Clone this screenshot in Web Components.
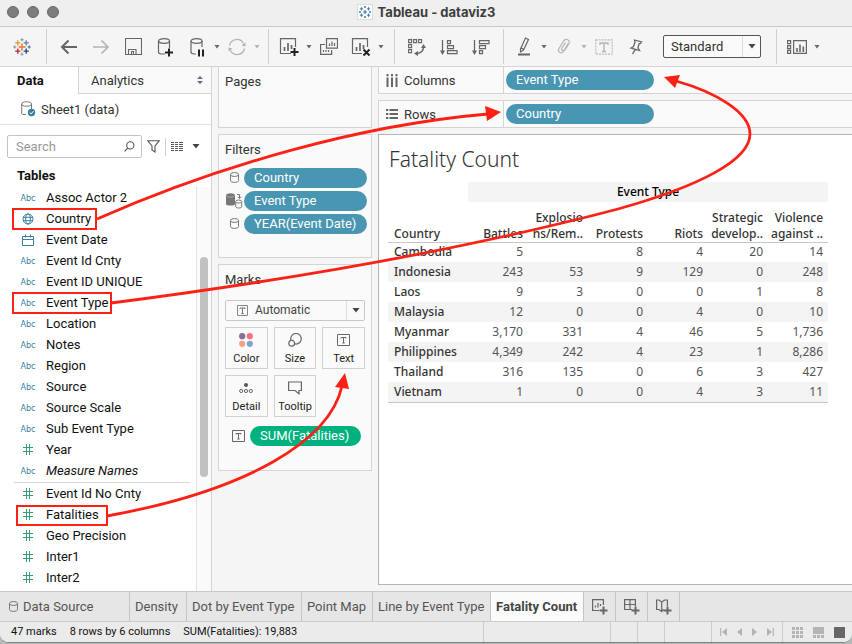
<!DOCTYPE html>
<html lang="en">
<head>
<meta charset="utf-8">
<title>Tableau - dataviz3</title>
<style>
  html, body { margin: 0; height: 100%; }
  body { font-family: Roboto, "Liberation Sans", sans-serif; font-size: 13px; color: #1f1f1f; background: #b4bab7; overflow: hidden; }
</style>
</head>
<body>
<tb-app></tb-app>
<script>
const g = '#666', lg = '#b4b4b4', blue = '#3a7f9f', green = '#3a9c77';
const cross = (x, y, r, c, w = 1.4) => `<path d="M${x - r} ${y}H${x + r}M${x} ${y - r}V${y + r}" stroke="${c}" stroke-width="${w}"/>`;
const ICONS = {
  logo: [20, 20, cross(10, 10, 3.5, '#e8762c', 1.5) + cross(5.8, 5.8, 2.6, '#e8912c', 1.3) + cross(14.2, 5.8, 2.6, '#5b879b', 1.3) + cross(5.8, 14.2, 2.6, '#c72035', 1.3) + cross(14.2, 14.2, 2.6, '#1f457e', 1.3) + cross(10, 2.8, 1.6, '#5b9bb0', 1) + cross(10, 17.2, 1.6, '#8a93b8', 1) + cross(2.8, 10, 1.6, '#7199a6', 1) + cross(17.2, 10, 1.6, '#59659a', 1)],
  back: [18, 16, `<path d="M17 8H2M8.500 1.500L2 8l6.500 6.500" stroke="${g}" stroke-width="2"/>`],
  forward: [18, 16, `<path d="M1 8h15M9.500 1.500L16 8l-6.500 6.500" stroke="${lg}" stroke-width="1.700"/>`],
  save: [17, 17, `<path d="M.5 .5h16v16H.5zM3.500 16v-4.500h7.500V16M6.500 16v-2.500h2V16" stroke="${g}" stroke-width="1.100"/>`],
  dbadd: [20, 20, `<path d="M10 17H6.500C4 17 3.500 16 3.500 15V4M14.500 4v7" stroke="${g}" stroke-width="1.200"/><ellipse cx="9" cy="4" rx="5.500" ry="2.300" stroke="${g}" stroke-width="1.200"/><path d="M14 11.500v8M10 15.500h8" stroke="#222" stroke-width="2"/>`],
  dbpause: [20, 20, `<path d="M9 17H7C4.500 17 4 16 4 15V4M15 4v6" stroke="${g}" stroke-width="1.200"/><ellipse cx="9.500" cy="4" rx="5.500" ry="2.300" stroke="${g}" stroke-width="1.200"/><path d="M12 12.500v7M16 12.500v7" stroke="#222" stroke-width="2"/>`],
  refresh: [20, 18, `<path d="M2.500 7.500A7.500 7.500 0 0 1 16.500 5.500M17.500 10.500A7.500 7.500 0 0 1 3.500 12.500" stroke="${lg}" stroke-width="1.300"/><path d="M14.500 7.500l4-3v4zM5.500 10.500l-4 3v-4z" fill="${lg}"/>`],
  caret: [6, 4, `<path d="M.5 0h5L3 3.500z" fill="${g}"/>`],
  caretLight: [6, 4, `<path d="M.5 0h5L3 3.500z" fill="${lg}"/>`],
  caretBig: [8, 5, `<path d="M.5 0h7L4 4.500z" fill="#444"/>`],
  newsheet: [20, 18, `<path d="M12 15.500H1.500V.7h15V9" stroke="${g}" stroke-width="1.200"/><path d="M5.500 9v4M9 5v8M12.500 7v4" stroke="${g}" stroke-width="1.700"/><path d="M15.500 10v8M11.500 14h8" stroke="#222" stroke-width="2"/>`],
  dup: [18, 17, `<path d="M6.500 .6h11v9.500h-11zM5 6.500H.6v9.900h11V12" stroke="${g}" stroke-width="1.200"/><path d="M9.500 5.500V8M12 3.500V8M14.500 5V8M3.500 12v2M6 12v2M8.500 12v2" stroke="${g}" stroke-width="1.200"/>`],
  clear: [20, 18, `<path d="M11 15.500H1.500V.7h15V9" stroke="${g}" stroke-width="1.200"/><path d="M5.500 9v4M9 5v8M12.500 7v4" stroke="${g}" stroke-width="1.700"/><path d="M12.500 11.500l6 6M18.500 11.500l-6 6" stroke="#222" stroke-width="2"/>`],
  swap: [18, 18, `<path d="M.6 1.600h3v3h-3zM5.600 1.600h3v3h-3zM10.600 1.600h3v3h-3zM.6 6.600h3v3h-3zM.6 11.600h3v3h-3z" stroke="${g}" stroke-width="1.100"/><path d="M15.500 9c0 4-2 6-7 6.500" stroke="${g}" stroke-width="1.400"/><path d="M15.500 6l2.500 4h-5zM6 15.500l4-2.500v5z" fill="${g}"/>`],
  sortasc: [18, 16, `<path d="M2.500 1v12" stroke="${g}" stroke-width="1.300"/><path d="M0 11.500h5L2.500 16z" fill="${g}"/><path d="M7.500 1.600h3v3h-3zM7.500 6.600h6v3h-6zM7.500 11.600h9.500v3H7.500z" stroke="${g}" stroke-width="1.200"/>`],
  sortdesc: [18, 16, `<path d="M2.500 1v12" stroke="${g}" stroke-width="1.300"/><path d="M0 11.500h5L2.500 16z" fill="${g}"/><path d="M7.500 1.600h9.500v3H7.500zM7.500 6.600h6v3h-6zM7.500 11.600h3v3h-3z" stroke="${g}" stroke-width="1.200"/>`],
  pen: [14, 19, `<path d="M8.500 1l3 1.500-5 10.500-3 2V12zM4 11l3 1.500" stroke="${g}" stroke-width="1.200"/><path d="M1 17.500h12" stroke="${g}" stroke-width="2"/>`],
  clip: [14, 17, `<path d="M11 5.500l-4.500 8C4.500 16 .5 14.500 1.700 11L7 2.500C9 .2 13.500 2 12 5.500L7.800 12c-1.500 1.500-4 .2-3-1.800L8.500 4.500" stroke="${lg}" stroke-width="1.200"/>`],
  textbox: [18, 16, `<path d="M.8 .8h16.400v14.400H.8z" stroke="#bbb" stroke-width="1.200" stroke-dasharray="2 1"/><path d="M5 6V4h8v2M9 4v8.500M7 12.500h4" stroke="${lg}" stroke-width="1.400"/>`],
  pin: [14, 16, `<path d="M5.500 1l7 2-1 1.500-1.500.3-1 4.200 1.500 2.500-8.500-2.500 2.300-1.200L6 3.500zM6.300 10.300L3.500 15" stroke="${g}" stroke-width="1.300"/>`],
  showme: [20, 14, `<path d="M.6 .6h3v3h-3zM.6 5.600h3v3h-3zM.6 10.400h3v3h-3zM6.600 .6h12.800v12.800H6.600z" stroke="${g}" stroke-width="1.200"/><path d="M10 8v4M13 4.500V12M16.300 6.500V12" stroke="${g}" stroke-width="1.600"/>`],
  app: [14, 14, cross(7, 7, 2, '#3f7fa5', 1.2) + cross(3.5, 3.8, 1.6, '#3f7fa5', 1) + cross(10.5, 3.8, 1.6, '#3f7fa5', 1) + cross(3.5, 10.2, 1.6, '#3f7fa5', 1) + cross(10.5, 10.2, 1.6, '#3f7fa5', 1) + cross(7, 2, 1, '#3f7fa5', 1) + cross(7, 12, 1, '#3f7fa5', 1) + cross(2, 7, 1, '#3f7fa5', 1) + cross(12, 7, 1, '#3f7fa5', 1)],
  updown: [6, 8, `<path d="M0 3h6L3 0zM0 5h6L3 8z" fill="#5f6b80"/>`],
  source: [15, 16, `<path d="M5 13.500H3c-1.500 0-2.300-.6-2.300-1.500V3M10.500 3v5" stroke="#777" stroke-width="1"/><ellipse cx="5.600" cy="3" rx="4.900" ry="2.200" stroke="#777"/><circle cx="10.500" cy="11.500" r="3.700" fill="${blue}"/><path d="M8.700 11.500l1.400 1.400 2.400-2.700" stroke="#fff"/>`],
  glass: [11, 11, `<circle cx="6.300" cy="4.400" r="3.600" stroke="#555" stroke-width="1.100"/><path d="M3.700 7.200L.6 10.400" stroke="#555" stroke-width="1.200"/>`],
  funnel: [13, 13, `<path d="M.8 .8h11.400L8 6v6L5 10V6z" stroke="#555" stroke-width="1.100"/>`],
  list: [12, 10, `<path d="M0 .5h3M4 .5h3M8 .5h4M0 2.500h3M4 2.500h3M8 2.500h4M0 4.500h3M4 4.500h3M8 4.500h4M0 6.500h3M4 6.500h3M8 6.500h4M0 8.500h3M4 8.500h3M8 8.500h4" stroke="#555"/>`],
  globe: [12, 12, `<circle cx="6" cy="6" r="5" stroke="${blue}"/><ellipse cx="6" cy="6" rx="2.300" ry="5" stroke="${blue}"/><path d="M1 4.300h10M1 7.700h10" stroke="${blue}"/>`],
  cal: [12, 12, `<path d="M.5 2.500h11v9H.5zM.5 5.500h11M3.500 .5v3M8.500 .5v3" stroke="${blue}"/>`],
  num: [10, 11, `<path d="M0 3.500h10M0 7.500h10M3.500 0v11M6.500 0v11" stroke="${green}"/>`],
  cyl: [9, 11, `<path d="M.5 2.500v6c0 2.500 8 2.500 8 0v-6" stroke="#777"/><ellipse cx="4.500" cy="2.500" rx="4" ry="2" stroke="#777"/>`],
  cyl2: [17, 16, `<path d="M0 2.500C0-.5 9-.5 9 2.500V11c0 2-9 2-9 0z" fill="#777"/><path d="M.5 3c1 1.500 7 1.500 8 0" stroke="#bbb" stroke-width=".7"/><path d="M9.700 8.500v5c0 2 6 2 6 0v-5" fill="#fafafa" stroke="#777"/><ellipse cx="12.700" cy="8.500" rx="3" ry="1.500" fill="#fafafa" stroke="#777"/><path d="M11 1.500h2.500V5M12 3.800l1.500 1.700L15 3.800" stroke="#777"/>`],
  cols: [12, 13, `<path d="M1.500 3.500V13M6 3.500V13M10.500 3.500V13M1.500 0v2.300M6 0v2.300M10.500 0v2.300" stroke="#666" stroke-width="2"/>`],
  rows: [12, 10, `<path d="M3.500 1H12M3.500 5H12M3.500 9H12M0 1h2.300M0 5h2.300M0 9h2.300" stroke="#666" stroke-width="1.800"/>`],
  t: [13, 12, `<path d="M.5 .5h12v11H.5z" stroke="#666"/><path d="M4 4.500V3.500h5v1M6.500 3.500V9M5.300 9h2.400" stroke="#666"/>`],
  tgray: [11, 11, `<path d="M.5 .5h10v10H.5z" stroke="#888"/><path d="M3 4V3h5v1M5.500 3v5.500M4.300 8.500h2.400" stroke="#777"/>`],
  color: [14, 14, `<circle cx="3.200" cy="3.200" r="3.100" fill="#8a6d9b"/><circle cx="10.800" cy="3.200" r="3.100" fill="#f9707f"/><circle cx="3.200" cy="10.800" r="3.100" fill="#f4a37c"/><circle cx="10.800" cy="10.800" r="3.100" fill="#7fa5cf"/>`],
  size: [14, 14, `<circle cx="8" cy="5.800" r="5.300" stroke="#666" stroke-width="1.200"/><circle cx="3.700" cy="10.300" r="2.900" fill="#fafafa" stroke="#666" stroke-width="1.200"/>`],
  detail: [14, 14, `<circle cx="7" cy="4" r="2" fill="#555"/><circle cx="2.200" cy="10" r="1.600" stroke="#666"/><circle cx="7" cy="10" r="1.600" stroke="#666"/><circle cx="11.800" cy="10" r="1.600" stroke="#666"/>`],
  tooltip: [14, 14, `<path d="M.6 1h12.800v8.500H11v3.300L7 9.500H.6z" stroke="#666" stroke-width="1.200"/>`],
  tabsheet: [16, 16, `<path d="M7 11.500H.6V.6h10.800V6" stroke="#666" stroke-width="1.200"/><path d="M3.500 6.500v2M6 4v4.500M8.500 5v2" stroke="#666" stroke-width="1.200"/><path d="M11.500 7.500v8M7.500 11.500h8" stroke="#666" stroke-width="2"/>`],
  tabdash: [16, 16, `<path d="M8 10.500H.6V.6h10.800V7M6 .6v10M.6 5.500h10.800" stroke="#666" stroke-width="1.200"/><path d="M11.500 7.500v8M7.500 11.500h8" stroke="#666" stroke-width="2"/>`],
  tabstory: [16, 16, `<path d="M.6 1v9.500H3l2.700 2V3L3 1zM5.700 3l3-2h2.700v6M5.700 12l2-1.500" stroke="#666" stroke-width="1.200"/><path d="M11.500 7.500v8M7.500 11.500h8" stroke="#666" stroke-width="2"/>`],
  first: [7, 8, `<path d="M.7 0v8" stroke="#b4b4b4" stroke-width="1.200"/><path d="M7 0v8L2 4z" fill="#b4b4b4"/>`],
  prev: [5, 8, `<path d="M5 0v8L0 4z" fill="#b4b4b4"/>`],
  next: [5, 8, `<path d="M0 0v8l5-4z" fill="#b4b4b4"/>`],
  last: [7, 8, `<path d="M6.300 0v8" stroke="#b4b4b4" stroke-width="1.200"/><path d="M0 0v8l5-4z" fill="#b4b4b4"/>`],
  grid: [11, 11, `<path d="M0 1.500h11M0 5.500h11M0 9.500h11" stroke="#b4b4b4" stroke-width="3" stroke-dasharray="3 1"/>`],
  film: [11, 11, `<path d="M0 0h11v7H0z" fill="#b4b4b4"/><path d="M0 9.500h11" stroke="#b4b4b4" stroke-width="3" stroke-dasharray="3 1"/>`],
  full: [11, 11, `<path d="M0 0h11v11H0z" fill="#666"/>`]
};

function define(name, css, html) {
  const tpl = document.createElement('template');
  customElements.define(name, class extends HTMLElement {
    connectedCallback() {
      if (this.shadowRoot) return;
      tpl.innerHTML = `<style>*{box-sizing:border-box}button{font:inherit;color:inherit;background:none;border:0;padding:0;margin:0}${css}</style>${typeof html === 'function' ? html(this) : html}`;
      this.attachShadow({ mode: 'open' }).append(tpl.content.cloneNode(true));
    }
  });
}

define('tb-icon', ':host{display:inline-flex;flex:none}svg{display:block}', el => {
  const [w, h, body] = ICONS[el.getAttribute('name')];
  return `<svg width="${w}" height="${h}" viewBox="0 0 ${w} ${h}" fill="none" aria-hidden="true">${body}</svg>`;
});

define('tb-title-bar', `
  :host{box-sizing:border-box;display:flex;align-items:center;height:27px;flex:none;background:#efefef;border-bottom:1px solid #c9c9c9;padding:0 7px 2px}
  .lights{display:flex;gap:8px;flex:1}
  .lights button{width:12px;height:12px;border-radius:50%;background:#7d7d7d;border:1px solid #666}
  h1{display:flex;align-items:center;gap:5px;margin:0;font:700 13px/16px Inter,sans-serif;color:#3d3d3d}
  .doc{display:flex;background:#fbfbfb;border:1px solid #ddd}
  .end{flex:1}`,
  `<div class="lights"><button aria-label="Close"></button><button aria-label="Minimize"></button><button aria-label="Zoom"></button></div>
   <h1><span class="doc"><tb-icon name="app"></tb-icon></span>Tableau - dataviz3</h1><div class="end"></div>`);

define('tb-tool', `
  :host{display:flex;flex:none}
  button{width:32px;height:32px;display:flex;align-items:center;justify-content:center}
  :host([small]) button{width:8px}`,
  el => `<button aria-label="${el.getAttribute('label')}"><tb-icon name="${el.getAttribute('icon')}"></tb-icon></button>`);

const tool = (i, l) => `<tb-tool icon="${i}" label="${l}"></tb-tool>`;
const more = (l, light) => `<tb-tool small icon="${light ? 'caretLight' : 'caret'}" label="${l} options"></tb-tool>`;
define('tb-toolbar', `
  :host{box-sizing:border-box;display:flex;align-items:center;height:40px;flex:none;background:#f5f5f5;border-bottom:1px solid #d4d4d4}
  .g{display:flex;align-items:center;height:35px;padding:0 6px;border-right:1px solid #d0d0d0}
  .g:last-child{border:0}
  .home{padding:0 8px 0 6px}
  .undo{padding:0 7px 0 6px}
  .s{padding:0 9px 0 4px}
  .n{padding:0 6px 0 4px}
  .pick{position:relative;display:flex;align-items:center;width:98px;height:23px;margin:0 9px 0 11px;border:1px solid #555;border-radius:2px;background:#fafafa}
  select{appearance:none;width:100%;height:100%;border:0;background:none;padding:0 20px 0 7px;font:13px/16px Roboto,sans-serif;color:#333}
  .pick span{position:absolute;right:0;top:0;bottom:0;width:18px;border-left:1px solid #ddd;display:flex;align-items:center;justify-content:center;pointer-events:none}`,
  `<div class="g home">${tool('logo', 'Start page')}</div>
   <div class="g undo">${tool('back', 'Undo')}${tool('forward', 'Redo')}${tool('save', 'Save')}${tool('dbadd', 'New data source')}${tool('dbpause', 'Pause updates')}${more('Pause')}${tool('refresh', 'Run update')}${more('Update', 1)}</div>
   <div class="g s">${tool('newsheet', 'New worksheet')}${more('Worksheet')}${tool('dup', 'Duplicate')}${tool('clear', 'Clear sheet')}${more('Clear')}</div>
   <div class="g">${tool('swap', 'Swap rows and columns')}${tool('sortasc', 'Sort ascending')}${tool('sortdesc', 'Sort descending')}</div>
   <div class="g n">${tool('pen', 'Highlight')}${more('Highlight')}${tool('clip', 'Group')}${more('Group', 1)}${tool('textbox', 'Show labels')}${tool('pin', 'Fix axes')}
     <div class="pick"><select aria-label="Fit"><option>Standard</option></select><span><tb-icon name="caretBig"></tb-icon></span></div></div>
   <div class="g n">${tool('showme', 'Show Me')}${more('Show Me')}</div>`);

define('tb-field', `
  :host{box-sizing:border-box;display:flex;align-items:center;height:21px;padding:0 0 0 19px;line-height:17px;font-size:13px;color:#111}
  .i{width:18px;display:flex;justify-content:center;color:${blue};font:9px/12px "DejaVu Sans Condensed","DejaVu Sans",sans-serif}
  .n{margin-left:9px;white-space:nowrap}
  :host([italic]) .n{font-style:italic}`,
  el => {
    const k = el.getAttribute('kind');
    return `<span class="i">${k === 'abc' ? 'Abc' : `<tb-icon name="${k}"></tb-icon>`}</span><span class="n"><slot></slot></span>`;
  });

const f = (k, n, x = '') => `<tb-field kind="${k}" ${x}>${n}</tb-field>`;
define('tb-data-pane', `
  :host{box-sizing:border-box;display:flex;flex-direction:column;min-height:0;background:#fff;border-right:1px solid #d4d4d4}
  .tabs{display:flex;height:27px;flex:none}
  .tabs button{text-align:left;font-size:13px}
  .tabs .d{width:78px;padding-left:17px;font-weight:700;color:#111}
  .tabs .a{flex:1;display:flex;align-items:center;justify-content:space-between;padding:0 8px 0 12px;background:#fafafa;border-left:1px solid #d4d4d4;border-bottom:1px solid #d4d4d4;color:#333}
  .src{display:flex;align-items:center;gap:5px;height:31px;flex:none;padding-left:21px;border-bottom:1px solid #e2e2e2;color:#333}
  .find{display:flex;align-items:center;flex:none;padding:10px 11px 0 7px;height:33px}
  .box{flex:1;min-width:0;display:flex;align-items:center;height:23px;border:1px solid #c4c4c4;border-radius:2px;padding-right:6px;margin-right:5px}
  input{flex:1;min-width:0;border:0;outline:0;background:none;padding:0 0 0 8px;font:13px/16px Roboto,sans-serif}
  input::placeholder{color:#999}
  .find button{display:flex;flex:none}
  .find .opt{margin-left:9px}
  .sep{width:1px;height:18px;background:#d0d0d0;margin:0 5px}
  h2{margin:0;flex:none;padding:9px 0 0 17px;height:29px;font:700 13px/17px Roboto,sans-serif;color:#111}
  .body{flex:1;display:flex;min-height:0}
  .list{flex:1;min-width:0;overflow:hidden}
  hr{border:0;border-top:1px solid #d8d8d8;margin:1px 6px 0 14px}
  .track{width:15px;background:#fafafa;border-left:1px solid #e2e2e2;padding-top:70px}
  .thumb{width:8px;height:220px;border-radius:4px;background:#c1c1c1;margin-left:3px}`,
  `<div class="tabs"><button class="d">Data</button><button class="a">Analytics<tb-icon name="updown"></tb-icon></button></div>
   <div class="src"><tb-icon name="source"></tb-icon><span>Sheet1 (data)</span></div>
   <div class="find"><label class="box"><input type="text" placeholder="Search" aria-label="Search"><tb-icon name="glass"></tb-icon></label>
     <button aria-label="Filter"><tb-icon name="funnel"></tb-icon></button><span class="sep"></span>
     <button aria-label="View"><tb-icon name="list"></tb-icon></button><button class="opt" aria-label="View options"><tb-icon name="caretBig"></tb-icon></button></div>
   <h2>Tables</h2>
   <div class="body"><div class="list">
   ${f('abc', 'Assoc Actor 2')}${f('globe', 'Country')}${f('cal', 'Event Date')}${f('abc', 'Event Id Cnty')}${f('abc', 'Event ID UNIQUE')}${f('abc', 'Event Type')}${f('abc', 'Location')}${f('abc', 'Notes')}${f('abc', 'Region')}${f('abc', 'Source')}${f('abc', 'Source Scale')}${f('abc', 'Sub Event Type')}${f('num', 'Year')}${f('abc', 'Measure Names', 'italic')}
   <hr>${f('num', 'Event Id No Cnty')}${f('num', 'Fatalities')}${f('num', 'Geo Precision')}${f('num', 'Inter1')}${f('num', 'Inter2')}
   </div><div class="track"><div class="thumb"></div></div></div>`);

define('tb-card', `
  :host{box-sizing:border-box;display:block;background:#fafafa;border:1px solid #d4d4d4;padding:6px;flex:none}
  h2{margin:0;font:400 13px/17px Roboto,sans-serif;color:#333}`,
  el => `<h2>${el.getAttribute('heading')}</h2><slot></slot>`);

define('tb-pill', `
  :host{box-sizing:border-box;display:block;height:20px;border-radius:10px;background:#4996b2;color:#fff;font-size:13px;line-height:20px;padding:0 10px;white-space:nowrap}
  :host([measure]){background:#00b180}`, '<slot></slot>');

define('tb-filter', `
  :host{display:flex;align-items:center;height:23px}
  .i{width:19px;display:flex;justify-content:center;flex:none}
  tb-pill{flex:1}`,
  el => `<span class="i"><tb-icon name="${el.getAttribute('icon')}"></tb-icon></span><tb-pill><slot></slot></tb-pill>`);

define('tb-mark-button', `
  :host{display:block}
  button{width:100%;height:42px;border:1px solid #d0d0d0;display:flex;flex-direction:column;align-items:center;justify-content:center;gap:5px;padding-top:3px;font-size:11px;line-height:14px;color:#222}
  .i{height:14px;display:flex;align-items:center}`,
  el => `<button><span class="i"><tb-icon name="${el.getAttribute('icon')}"></tb-icon></span><span><slot></slot></span></button>`);

define('tb-side-cards', `
  :host{display:flex;flex-direction:column;gap:6px;margin-top:-1px}
  .filters{padding:8px 0 16px;margin-right:-2px}
  .pages{height:62px}
  .m{height:207px}
  .type{position:relative;margin:12px 0 6px;height:21px;border:1px solid #c8c8c8;border-radius:2px;display:flex;align-items:center}
  .type .t{margin-left:11px}
  select{appearance:none;flex:1;border:0;background:none;height:100%;padding:0 20px 0 7px;font:12px/15px Roboto,sans-serif;color:#444}
  .type span{position:absolute;right:0;top:0;bottom:0;width:18px;border-left:1px solid #ddd;display:flex;align-items:center;justify-content:center;pointer-events:none}
  .grid{display:grid;grid-template-columns:1fr 1fr 1fr;gap:6px}
  .enc{display:flex;align-items:center;gap:5px;padding:9px 4px 0 7px}
  .enc tb-pill{flex:1}`,
  `<tb-card class="pages" heading="Pages"></tb-card>
   <tb-card heading="Filters"><div class="filters"><tb-filter icon="cyl">Country</tb-filter><tb-filter icon="cyl2">Event Type</tb-filter><tb-filter icon="cyl">YEAR(Event Date)</tb-filter></div></tb-card>
   <tb-card class="m" heading="Marks">
     <div class="type"><tb-icon class="t" name="tgray"></tb-icon><select aria-label="Mark type"><option>Automatic</option></select><span><tb-icon name="caretBig"></tb-icon></span></div>
     <div class="grid"><tb-mark-button icon="color">Color</tb-mark-button><tb-mark-button icon="size">Size</tb-mark-button><tb-mark-button icon="t">Text</tb-mark-button><tb-mark-button icon="detail">Detail</tb-mark-button><tb-mark-button icon="tooltip">Tooltip</tb-mark-button></div>
     <div class="enc"><tb-icon name="t"></tb-icon><tb-pill measure>SUM(Fatalities)</tb-pill></div>
   </tb-card>`);

define('tb-shelf', `
  :host{box-sizing:border-box;display:flex;height:28px;flex:none;background:#fafafa;border:1px solid #d4d4d4;border-right:0}
  .l{width:125px;display:flex;align-items:center;border-right:1px solid #d4d4d4;color:#333}
  .ic{width:25px;display:flex;justify-content:center}
  .p{flex:1;display:flex;align-items:center;padding-left:2px}
  tb-pill{width:148px}`,
  el => `<div class="l"><span class="ic"><tb-icon name="${el.getAttribute('icon')}"></tb-icon></span>${el.getAttribute('heading')}</div><div class="p"><tb-pill><slot></slot></tb-pill></div>`);

const DATA = [
  ['Cambodia', '5', '', '8', '4', '20', '14'],
  ['Indonesia', '243', '53', '9', '129', '0', '248'],
  ['Laos', '9', '3', '0', '0', '1', '8'],
  ['Malaysia', '12', '0', '0', '4', '0', '10'],
  ['Myanmar', '3,170', '331', '4', '46', '5', '1,736'],
  ['Philippines', '4,349', '242', '4', '23', '1', '8,286'],
  ['Thailand', '316', '135', '0', '6', '3', '427'],
  ['Vietnam', '1', '0', '0', '4', '3', '11']
];
define('tb-sheet', `
  :host{box-sizing:border-box;display:block;flex:1;background:#fff;border:1px solid #b4b4b4;border-right:0;padding:11px 9px;font-family:"Noto Sans","Open Sans",sans-serif}
  h2{margin:0 0 9px;padding-left:1px;font:300 21px/27px "Noto Sans","Open Sans",sans-serif;color:#333}
  table{border-collapse:collapse;table-layout:fixed;width:440px;font-size:12px;line-height:16px;color:#555}
  col{width:60px}
  col:first-child{width:80px}
  th,td{padding:0 5px 0 0;text-align:right;white-space:nowrap}
  th{font-weight:500;color:#333}
  .top th{height:20px;padding:0;text-align:center;background:#f4f4f4;color:#000}
  .cols th{height:40px;vertical-align:bottom;border-bottom:1px solid #c8c8c8}
  .cols th:first-child,tbody th{text-align:left;padding-left:6px}
  tbody th,tbody td{height:20px}
  tbody tr:nth-child(even){background:#f4f4f4}
  tbody{border-bottom:1px solid #c8c8c8}`,
  `<h2>Fatality Count</h2>
   <table><colgroup><col><col><col><col><col><col><col></colgroup>
   <thead><tr class="top"><td></td><th colspan="6">Event Type</th></tr>
   <tr class="cols"><th>Country</th><th>Battles</th><th>Explosio<br>ns/Rem..</th><th>Protests</th><th>Riots</th><th>Strategic<br>develop..</th><th>Violence<br>against ..</th></tr></thead>
   <tbody>${DATA.map(r => `<tr><th>${r[0]}</th>${r.slice(1).map(v => `<td>${v}</td>`).join('')}</tr>`).join('')}</tbody></table>`);

define('tb-sheet-tabs', `
  :host{box-sizing:border-box;display:flex;height:31px;flex:none;background:#e6e6e6;border-top:1px solid #c8c8c8;border-bottom:1px solid #ccc;color:#555;font-size:13px}
  button{display:flex;align-items:center;justify-content:flex-start;gap:5px;border-right:1px solid #c4c4c4;padding:0 5px;white-space:nowrap;line-height:17px}
  .ds{width:130px;padding-left:9px}
  .n{width:32px;justify-content:center}
  .on{background:#fbfbfb;font-weight:700;color:#444}`,
  `<button class="ds"><tb-icon name="cyl"></tb-icon>Data Source</button><button style="width:57px">Density</button><button style="width:115px">Dot by Event Type</button><button style="width:71px">Point Map</button><button style="width:118px">Line by Event Type</button><button class="on" style="width:93px">Fatality Count</button>
   <button class="n" aria-label="New worksheet"><tb-icon name="tabsheet"></tb-icon></button><button class="n" aria-label="New dashboard"><tb-icon name="tabdash"></tb-icon></button><button class="n" aria-label="New story"><tb-icon name="tabstory"></tb-icon></button>`);

define('tb-status-bar', `
  :host{box-sizing:border-box;display:flex;height:20px;flex:none;background:#ebebeb;font-size:11px;line-height:14px;color:#111}
  .t{flex:1;display:flex;align-items:center;gap:13px;padding-left:11px}
  .c{border-left:1px solid #ccc;display:flex;align-items:center}
  button{display:flex}`,
  `<div class="t"><span>47 marks</span><span>8 rows by 6 columns</span><span>SUM(Fatalities): 19,883</span></div>
   <div class="c" style="width:127px"></div><div class="c" style="width:27px"></div><div class="c" style="width:27px"></div><div class="c" style="width:47px"></div>
   <div class="c" style="width:71px;gap:10px;padding-left:8px"><button aria-label="First"><tb-icon name="first"></tb-icon></button><button aria-label="Previous"><tb-icon name="prev"></tb-icon></button><button aria-label="Next"><tb-icon name="next"></tb-icon></button><button aria-label="Last"><tb-icon name="last"></tb-icon></button></div>
   <div class="c" style="width:70px;gap:10px;padding-left:9px"><button aria-label="Sheet sorter"><tb-icon name="grid"></tb-icon></button><button aria-label="Filmstrip"><tb-icon name="film"></tb-icon></button><button aria-label="Tabs"><tb-icon name="full"></tb-icon></button></div>`);

define('tb-annotations', `
  :host{position:absolute;left:0;top:0;pointer-events:none}
  svg{display:block}`,
  `<svg width="852" height="644" viewBox="0 0 852 644" fill="none" stroke="#fc2115" stroke-width="2.800" aria-hidden="true">
   <g stroke-width="2"><rect x="13" y="209" width="83" height="20"/><rect x="13" y="293" width="98" height="20"/><rect x="17" y="506" width="90" height="19"/></g>
   <path d="M97 219C220 165 360 125 488 114"/>
   <path d="M111 303C290 280 470 248 618 209C700 186 750 160 750 134C750 112 715 92 676 81"/>
   <path d="M107 516C250 490 330 440 342 386"/>
   <g fill="#fc2115" stroke="none"><path d="M501 112l-16-6 2 15z"/><path d="M664 77l16-2-5 13z"/><path d="M345 373l-10 14 14 2z"/></g></svg>`);

define('tb-app', `
  :host{box-sizing:border-box;display:flex;flex-direction:column;position:relative;height:calc(100vh - 1px);background:#f5f5f5;border-bottom:1px solid #7d8582;border-radius:0 0 9px 9px;overflow:hidden}
  main{flex:1;min-height:0;display:grid;grid-template-columns:212px 154px minmax(0,1fr);column-gap:6px}
  .view{display:flex;flex-direction:column;gap:6px;margin-top:-1px;padding-bottom:6px}`,
  `<tb-title-bar></tb-title-bar><tb-toolbar></tb-toolbar>
   <main><tb-data-pane></tb-data-pane><tb-side-cards></tb-side-cards>
     <div class="view"><tb-shelf icon="cols" heading="Columns">Event Type</tb-shelf><tb-shelf icon="rows" heading="Rows">Country</tb-shelf><tb-sheet></tb-sheet></div></main>
   <tb-sheet-tabs></tb-sheet-tabs><tb-status-bar></tb-status-bar><tb-annotations></tb-annotations>`);
</script>
</body>
</html>
